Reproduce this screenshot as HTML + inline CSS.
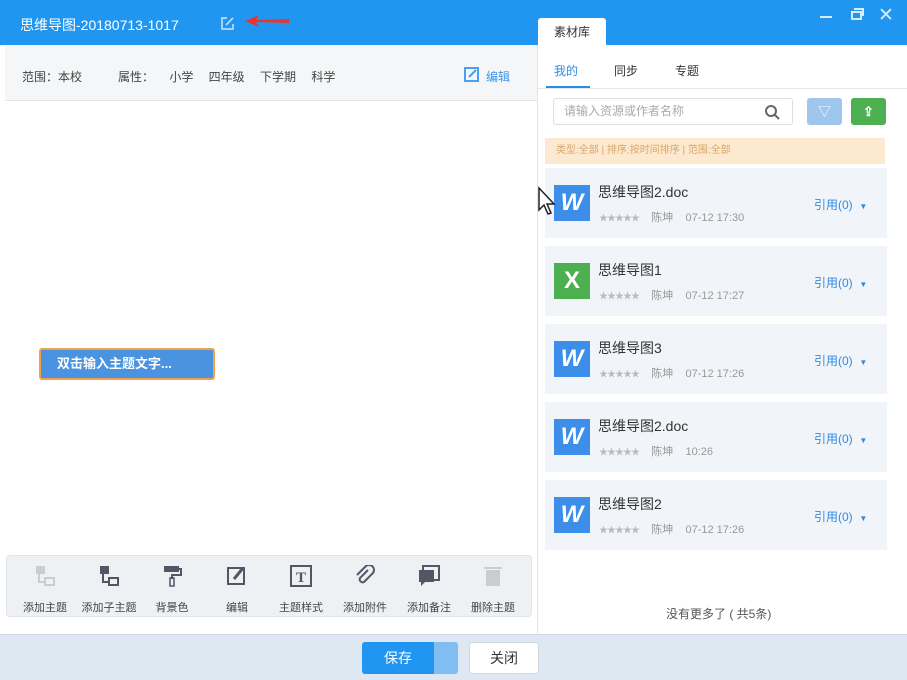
<!DOCTYPE html>
<html><head><meta charset="utf-8"><style>
*{margin:0;padding:0;box-sizing:border-box}
body{width:907px;height:680px;overflow:hidden;position:relative;font-family:"Liberation Sans","Noto Sans CJK SC",sans-serif;background:#fff;font-size:12px;color:#333}
.a{position:absolute}
.item{position:absolute;left:545px;width:342px;height:70px;background:#f1f4f8}
.ic{position:absolute;left:9px;top:17px;width:36px;height:36px;color:#fff;font-weight:bold;font-style:italic;font-size:24px;text-align:center;line-height:36px}
.nm{position:absolute;left:53px;top:14px;font-size:14px;color:#333}
.mt{position:absolute;left:54px;top:41px;font-size:11px;color:#999;word-spacing:0}
.st{color:#bbb;letter-spacing:-1px;font-size:9px}
.ref{position:absolute;left:269px;top:28px;color:#2f8ae6;font-size:12px}
.tb{position:absolute;top:565px;width:60px;text-align:center;font-size:11px;color:#444}
.tb div{height:24px;margin-bottom:10px}
</style></head><body>
<div class="a" style="left:0;top:0;width:907px;height:45px;background:#2196f0"></div>
<div class="a" style="left:20px;top:15px;color:#fff;font-size:14px">思维导图-20180713-1017</div>
<svg class="a" style="left:220px;top:16px" width="15" height="15" viewBox="0 0 15 15"><path d="M7 2H2v11h11V8" fill="none" stroke="#cfe6fb" stroke-width="1.5"/><path d="M6 9l7-7" stroke="#cfe6fb" stroke-width="1.5"/></svg>
<svg class="a" style="left:243px;top:14px" width="48" height="14"><path d="M2 7L16 1L13 6L46 5L46 9L13 8L16 13Z" fill="#e8362e"/></svg>
<div class="a" style="left:820px;top:16px;width:12px;height:2px;background:#d8ebfc"></div>
<div class="a" style="left:851px;top:11px;width:11px;height:9px;border:2px solid #d8ebfc"></div>
<div class="a" style="left:854px;top:8px;width:10px;height:8px;border-top:2px solid #d8ebfc;border-right:2px solid #d8ebfc"></div>
<div class="a" style="left:878px;top:4px;color:#d8ebfc;font-size:19px">✕</div>
<div class="a" style="left:5px;top:45px;width:532px;height:56px;background:#f4f6f8;border-bottom:1px solid #e2e5e8"></div>
<div class="a" style="left:22px;top:68px;font-size:12px;color:#444">范围：本校</div>
<div class="a" style="left:118px;top:68px;font-size:12px;color:#444;word-spacing:12px">属性： 小学 四年级 下学期 科学</div>
<svg class="a" style="left:464px;top:67px" width="15" height="15"><rect x="1" y="1" width="13" height="13" fill="none" stroke="#4aa0ef" stroke-width="2"/><path d="M5 10l7-7" stroke="#4aa0ef" stroke-width="2"/></svg>
<div class="a" style="left:486px;top:68px;color:#3a95ee">编辑</div>
<div class="a" style="left:39px;top:348px;width:176px;height:32px;background:#4a93e0;border:2px solid #f0a04a;border-radius:3px;color:#fff;font-size:13px;font-weight:bold;padding-left:16px;line-height:28px">双击输入主题文字...</div>
<div class="a" style="left:6px;top:555px;width:526px;height:62px;background:#eef1f4;border:1px solid #e0e4e8;border-radius:4px"></div>
<div class="tb" style="left:15px"><div><svg width="22" height="22"><rect x="2" y="1" width="9" height="8" fill="#ccc"/><path d="M5 9v8h6" stroke="#ccc" fill="none" stroke-width="2"/><rect x="11" y="13" width="9" height="7" fill="none" stroke="#ccc" stroke-width="2"/></svg></div>添加主题</div>
<div class="tb" style="left:79px"><div><svg width="22" height="22"><rect x="2" y="1" width="9" height="8" fill="#556"/><path d="M5 9v8h6" stroke="#556" fill="none" stroke-width="2"/><rect x="11" y="13" width="9" height="7" fill="none" stroke="#556" stroke-width="2"/></svg></div>添加子主题</div>
<div class="tb" style="left:142px"><div><svg width="22" height="22"><rect x="3" y="1" width="15" height="6" fill="#556"/><path d="M18 4h2v6h-9v4" stroke="#556" fill="none" stroke-width="2"/><rect x="9" y="13" width="4" height="8" fill="none" stroke="#556" stroke-width="1.5"/></svg></div>背景色</div>
<div class="tb" style="left:207px"><div><svg width="22" height="22"><rect x="2" y="3" width="16" height="16" fill="none" stroke="#556" stroke-width="2"/><path d="M8 14l9-11" stroke="#556" stroke-width="3"/></svg></div>编辑</div>
<div class="tb" style="left:271px"><div><svg width="22" height="22"><rect x="1" y="1" width="20" height="20" fill="none" stroke="#556" stroke-width="2"/><text x="11" y="17" font-size="15" text-anchor="middle" fill="#556" font-family="Liberation Serif" font-weight="bold">T</text></svg></div>主题样式</div>
<div class="tb" style="left:335px"><div><svg width="22" height="22"><path d="M14 5L6 13a3 3 0 0 0 4 4l9-9a5 5 0 0 0-7-7L3 10" fill="none" stroke="#556" stroke-width="2"/></svg></div>添加附件</div>
<div class="tb" style="left:399px"><div><svg width="22" height="22"><rect x="5" y="1" width="16" height="14" fill="none" stroke="#556" stroke-width="2"/><rect x="1" y="5" width="15" height="12" fill="#556"/><path d="M3 17v4l4-4" fill="#556"/></svg></div>添加备注</div>
<div class="tb" style="left:463px"><div><svg width="22" height="22"><rect x="4" y="5" width="14" height="16" fill="#ccc"/><rect x="2" y="2" width="18" height="2" fill="#ccc"/></svg></div>删除主题</div>
<div class="a" style="left:0;top:634px;width:907px;height:46px;background:#dde8f3;border-top:1px solid #cfd9e4"></div>
<div class="a" style="left:362px;top:642px;width:72px;height:32px;background:#2196f0;color:#fff;font-size:14px;text-align:center;line-height:32px;border-radius:3px 0 0 3px">保存</div>
<div class="a" style="left:434px;top:642px;width:24px;height:32px;background:#7fbdf2;border-radius:0 3px 3px 0"></div>
<div class="a" style="left:469px;top:642px;width:70px;height:32px;background:#fff;border:1px solid #cfd6de;font-size:14px;text-align:center;line-height:30px;border-radius:3px">关闭</div>
<div class="a" style="left:537px;top:45px;width:370px;height:589px;background:#fff;border-left:1px solid #e2e5e8"></div>
<div class="a" style="left:538px;top:18px;width:68px;height:28px;background:#fff;border-radius:3px 3px 0 0;text-align:center;line-height:28px;font-size:12px">素材库</div>
<div class="a" style="left:554px;top:62px;color:#2f8ae6;font-size:12px">我的</div>
<div class="a" style="left:614px;top:62px;font-size:12px">同步</div>
<div class="a" style="left:675px;top:62px;font-size:12px">专题</div>
<div class="a" style="left:546px;top:86px;width:44px;height:3px;background:#2f8ae6"></div>
<div class="a" style="left:537px;top:88px;width:370px;height:1px;background:#e6e9ec"></div>
<div class="a" style="left:553px;top:98px;width:240px;height:27px;border:1px solid #dcdfe3;border-radius:3px;color:#aaa;font-size:12px;padding-left:10px;line-height:25px">请输入资源或作者名称</div>
<svg class="a" style="left:764px;top:104px" width="16" height="16"><circle cx="7" cy="7" r="5" fill="none" stroke="#666" stroke-width="2"/><path d="M11 11l4 4" stroke="#666" stroke-width="2"/></svg>
<div class="a" style="left:807px;top:98px;width:35px;height:27px;background:#9fc7ee;border-radius:3px;color:#fff;text-align:center;line-height:27px;font-size:13px">▽</div>
<div class="a" style="left:851px;top:98px;width:35px;height:27px;background:#4caf50;border-radius:3px;color:#fff;text-align:center;line-height:27px;font-size:13px;font-weight:bold">⇪</div>
<div class="a" style="left:545px;top:138px;width:340px;height:26px;background:#fce9cf;color:#d9a66a;font-size:10px;padding-left:11px;line-height:26px">类型:全部 | 排序:按时间排序 | 范围:全部</div>
<div class="item" style="top:168px"><div class="ic" style="background:#3d8ee8">W</div><div class="nm">思维导图2.doc</div><div class="mt"><span class="st">★★★★★</span>&nbsp;&nbsp;&nbsp; 陈坤 &nbsp;&nbsp; 07-12 17:30</div><div class="ref">引用(0) &nbsp;<span style="font-size:8px">▼</span></div></div>
<div class="item" style="top:246px"><div class="ic" style="background:#4caf50;font-style:normal">X</div><div class="nm">思维导图1</div><div class="mt"><span class="st">★★★★★</span>&nbsp;&nbsp;&nbsp; 陈坤 &nbsp;&nbsp; 07-12 17:27</div><div class="ref">引用(0) &nbsp;<span style="font-size:8px">▼</span></div></div>
<div class="item" style="top:324px"><div class="ic" style="background:#3d8ee8">W</div><div class="nm">思维导图3</div><div class="mt"><span class="st">★★★★★</span>&nbsp;&nbsp;&nbsp; 陈坤 &nbsp;&nbsp; 07-12 17:26</div><div class="ref">引用(0) &nbsp;<span style="font-size:8px">▼</span></div></div>
<div class="item" style="top:402px"><div class="ic" style="background:#3d8ee8">W</div><div class="nm">思维导图2.doc</div><div class="mt"><span class="st">★★★★★</span>&nbsp;&nbsp;&nbsp; 陈坤 &nbsp;&nbsp; 10:26</div><div class="ref">引用(0) &nbsp;<span style="font-size:8px">▼</span></div></div>
<div class="item" style="top:480px"><div class="ic" style="background:#3d8ee8">W</div><div class="nm">思维导图2</div><div class="mt"><span class="st">★★★★★</span>&nbsp;&nbsp;&nbsp; 陈坤 &nbsp;&nbsp; 07-12 17:26</div><div class="ref">引用(0) &nbsp;<span style="font-size:8px">▼</span></div></div>
<div class="a" style="left:666px;top:605px;font-size:12px;color:#555">没有更多了 ( 共5条)</div>
<svg class="a" style="left:537px;top:186px" width="20" height="30"><path d="M2 2v22l5-5 4 9 3-1-4-9h7z" fill="#fff" stroke="#222" stroke-width="1.5"/></svg>
</body></html>
